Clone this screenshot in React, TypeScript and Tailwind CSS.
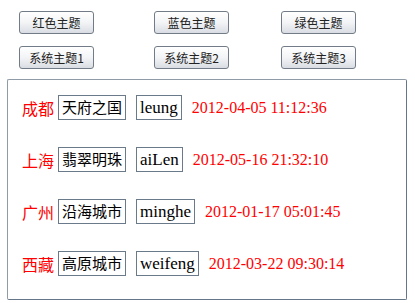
const themes = [
  ["红色主题", "蓝色主题", "绿色主题"],
  ["系统主题1", "系统主题2", "系统主题3"],
]

const rows = [
  { city: "成都", name: "天府之国", user: "leung", time: "2012-04-05 11:12:36" },
  { city: "上海", name: "翡翠明珠", user: "aiLen", time: "2012-05-16 21:32:10" },
  { city: "广州", name: "沿海城市", user: "minghe", time: "2012-01-17 05:01:45" },
  { city: "西藏", name: "高原城市", user: "weifeng", time: "2012-03-22 09:30:14" },
]

const cjk = "font-['Noto_Sans_CJK_SC',sans-serif]"

function ThemeButton({ label, className }: { label: string; className?: string }) {
  return (
    <button
      className={`h-[23px] w-[75px] rounded-[3px] border border-[#727c88] bg-gradient-to-b from-white via-[#f3f4f6] to-[#d9dde3] text-[12px] leading-none text-[#222] ${cjk} ${className ?? ""}`}
    >
      {label}
    </button>
  )
}

export default function App() {
  return (
    <div className="h-[303px] w-[415px] bg-white pt-[11px]">
      {themes.map((row, i) => (
        <div key={i} className={`flex ${i > 0 ? "mt-[12px]" : ""}`}>
          <ThemeButton label={row[0]} className="ml-[19px]" />
          <ThemeButton label={row[1]} className="ml-[60px]" />
          <ThemeButton label={row[2]} className="ml-[52px]" />
        </div>
      ))}
      <div className="ml-[7px] mt-[10px] h-[221px] w-[400px] rounded-[2px] border border-[#8f9ca8] border-b-[#66768a] border-r-[#66768a] pl-[14px] pt-[15px]">
        <div className="flex flex-col gap-[27px]">
          {rows.map((r) => (
            <div key={r.city} className="flex h-[25px] items-center">
              <span className={`w-[36px] text-[16px] text-[#ff0000] ${cjk}`}>{r.city}</span>
              <span
                className={`flex h-[25px] items-center border border-[#6b7a8a] px-[3px] text-[15px] text-black ${cjk}`}
              >
                {r.name}
              </span>
              <span className="ml-[10px] flex h-[25px] items-center border border-[#6b7a8a] px-[3px] font-['Liberation_Serif',serif] text-[17px] text-black">
                {r.user}
              </span>
              <span className="ml-[10px] font-['Liberation_Serif',serif] text-[16px] text-[#ff0000]">
                {r.time}
              </span>
            </div>
          ))}
        </div>
      </div>
    </div>
  )
}
